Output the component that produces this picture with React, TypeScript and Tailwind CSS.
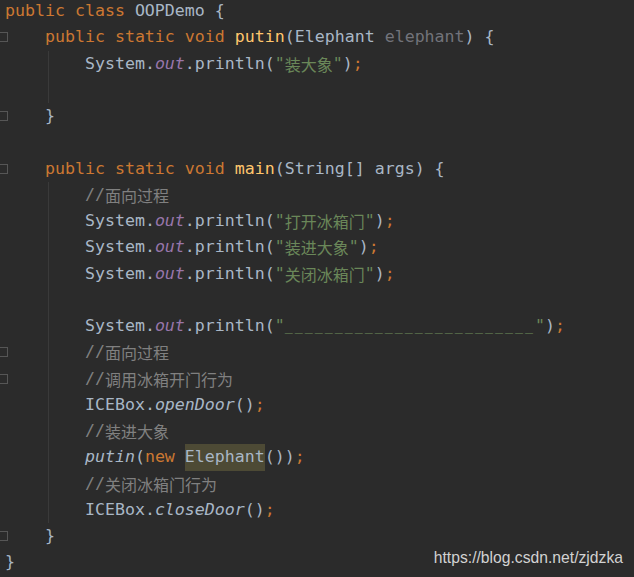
import React from "react";

type Tok = [string, string];

const KW = "text-[#cc7832]";
const TX = "text-[#a9b7c6]";
const STR = "text-[#6a8759]";
const FIELD = "text-[#9876aa] italic";
const DECL = "text-[#ffc66d]";
const PARAM = "text-[#72737a]";
const CMT = "text-[#808080]";
const CALL = "text-[#a9b7c6] italic";
const CJK = "font-['Noto_Sans_CJK_SC',sans-serif] text-[16px]";
const HL = "inline-block bg-[#4d4a35] text-[#a9b7c6]";
// underscores in the IDE font show as separate dashes
const DASH = "text-[#6a8759] text-[13.3px] tracking-[2px]";

const println = (s: string, cls = `${STR} ${CJK}`): Tok[] => [
  ["System.", TX],
  ["out", FIELD],
  [".println(", TX],
  ['"', STR],
  [s, cls],
  ['"', STR],
  [")", TX],
  [";", KW],
];

const comment = (s: string): Tok[] => [
  ["//", CMT],
  [s, `${CMT} ${CJK}`],
];

interface Line {
  indent: number;
  toks: Tok[];
  guide?: boolean;
  fold?: boolean;
}

const lines: Line[] = [
  { indent: 0, toks: [["public class ", KW], ["OOPDemo {", TX]] },
  {
    indent: 4,
    fold: true,
    toks: [
      ["public static void ", KW],
      ["putin", DECL],
      ["(Elephant ", TX],
      ["elephant", PARAM],
      [") {", TX],
    ],
  },
  { indent: 8, guide: true, toks: println("装大象") },
  { indent: 0, guide: true, toks: [] },
  { indent: 4, fold: true, toks: [["}", TX]] },
  { indent: 0, toks: [] },
  {
    indent: 4,
    fold: true,
    toks: [
      ["public static void ", KW],
      ["main", DECL],
      ["(String[] args) {", TX],
    ],
  },
  { indent: 8, guide: true, toks: comment("面向过程") },
  { indent: 8, guide: true, toks: println("打开冰箱门") },
  { indent: 8, guide: true, toks: println("装进大象") },
  { indent: 8, guide: true, toks: println("关闭冰箱门") },
  { indent: 0, guide: true, toks: [] },
  { indent: 8, guide: true, toks: println("_________________________", DASH) },
  { indent: 8, guide: true, fold: true, toks: comment("面向过程") },
  { indent: 8, guide: true, fold: true, toks: comment("调用冰箱开门行为") },
  {
    indent: 8,
    guide: true,
    toks: [["ICEBox.", TX], ["openDoor", CALL], ["()", TX], [";", KW]],
  },
  { indent: 8, guide: true, toks: comment("装进大象") },
  {
    indent: 8,
    guide: true,
    toks: [
      ["putin", CALL],
      ["(", TX],
      ["new ", KW],
      ["Elephant", HL],
      ["())", TX],
      [";", KW],
    ],
  },
  { indent: 8, guide: true, toks: comment("关闭冰箱门行为") },
  {
    indent: 8,
    guide: true,
    toks: [["ICEBox.", TX], ["closeDoor", CALL], ["()", TX], [";", KW]],
  },
  { indent: 4, fold: true, toks: [["}", TX]] },
  { indent: 0, toks: [["}", TX]] },
];

function CodeLine({ line }: { line: Line }) {
  return (
    <div className="relative flex h-[26.25px] items-center whitespace-pre">
      {/* fold marker in the gutter */}
      {line.fold && (
        <span className="absolute left-[-6px] top-[8px] h-[10px] w-[9px] border border-[#565656] bg-[#2b2b2b]" />
      )}
      {/* indent guide */}
      {line.guide && (
        <span className="absolute left-[43px] top-0 bottom-0 w-px bg-[#3a3a3a]" />
      )}
      <span>{" ".repeat(line.indent)}</span>
      {line.toks.map(([text, cls], i) => (
        <span key={i} className={cls}>
          {text}
        </span>
      ))}
    </div>
  );
}

export default function App() {
  return (
    <div className="relative h-[577px] w-[634px] overflow-hidden bg-[#2b2b2b]">
      <div className="mt-[-2px] pl-[5px] font-['DejaVu_Sans_Mono','Noto_Sans_CJK_SC',monospace] text-[16.6px] leading-[26.25px] text-[#a9b7c6]">
        {lines.map((l, i) => (
          <CodeLine key={i} line={l} />
        ))}
      </div>

      {/* watermark */}
      <div className="absolute right-[11px] bottom-[7px] font-['Liberation_Sans',Arial,sans-serif] text-[15.7px] text-[#d2d2d2]">
        https://blog.csdn.net/zjdzka
      </div>
    </div>
  );
}
